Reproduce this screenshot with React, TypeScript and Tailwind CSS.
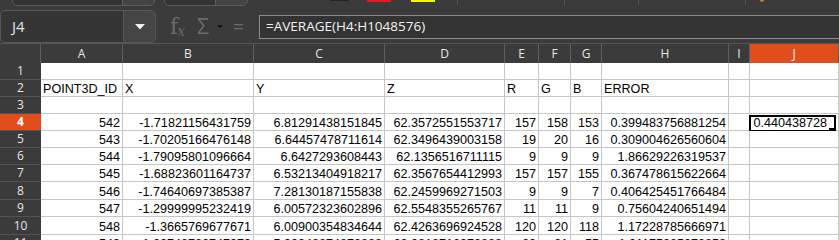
import React from "react";

const colLetters = ["A", "B", "C", "D", "E", "F", "G", "H", "I", "J"];
const rowHeights = ["h-[17px]", "h-[17px]", "h-[17px]", "h-[17px]", "h-[17px]", "h-[17px]", "h-[17px]", "h-[18px]", "h-[17px]", "h-[18px]", "h-[17px]"];

// numeric columns are right aligned, labels left aligned
const header = ["POINT3D_ID", "X", "Y", "Z", "R", "G", "B", "ERROR", "", ""];

const data: string[][] = [
  ["542", "-1.71821156431759", "6.81291438151845", "62.3572551553717", "157", "158", "153", "0.399483756881254", "", "0.440438728"],
  ["543", "-1.70205166476148", "6.64457478711614", "62.3496439003158", "19", "20", "16", "0.309004626560604", "", ""],
  ["544", "-1.79095801096664", "6.6427293608443", "62.1356516711115", "9", "9", "9", "1.86629226319537", "", ""],
  ["545", "-1.68823601164737", "6.53213404918217", "62.3567654412993", "157", "157", "155", "0.367478615622664", "", ""],
  ["546", "-1.74640697385387", "7.28130187155838", "62.2459969271503", "9", "9", "7", "0.406425451766484", "", ""],
  ["547", "-1.29999995232419", "6.00572323602896", "62.5548355265767", "11", "11", "9", "0.75604240651494", "", ""],
  ["548", "-1.3665769677671", "6.00900354834644", "62.4263696924528", "120", "120", "118", "1.17228785666971", "", ""],
  ["549", "-1.60748786747979", "5.99348874872888", "62.3818716972888", "60", "61", "55", "1.01175285270858", "", ""],
];

function Cell({ text, right }: { text: string; right?: boolean }) {
  return (
    <div
      className={`relative flex items-end bg-white border-r border-b border-[#c6c6c6] font-['Liberation_Sans',Arial,sans-serif] text-[12.6px] leading-[13px] text-black whitespace-nowrap ${
        right ? "justify-end pr-[2px]" : "justify-start pl-[2px]"
      }`}
    >
      {text}
    </div>
  );
}

export default function App() {
  const rows: { cells: string[]; right: boolean }[] = [
    { cells: Array(10).fill(""), right: false },
    { cells: header, right: false },
    { cells: Array(10).fill(""), right: false },
    ...data.map((r) => ({ cells: r, right: true })),
  ];

  return (
    <div className="w-[839px] h-[240px] overflow-hidden bg-[#3b3b3b] font-['Open_Sans',sans-serif]">
      {/* toolbar remnants, cut off at the top */}
      <div className="h-[10px] flex items-start overflow-hidden">
        <div className="ml-[12px] w-[143px] h-[20px] -mt-[14px] flex rounded-[5px] border border-[#5c5c5c] bg-[#333333] overflow-hidden">
          <div className="flex-1" />
          <div className="w-[32px] bg-[#454545] border-l border-[#5c5c5c]" />
        </div>
        <div className="ml-[9px] w-[84px] h-[20px] -mt-[14px] flex rounded-[5px] border border-[#5c5c5c] bg-[#333333] overflow-hidden">
          <div className="flex-1" />
          <div className="w-[32px] bg-[#454545] border-l border-[#5c5c5c]" />
        </div>
        <div className="ml-[82px] w-[19px] h-[1px] bg-[#222222]" />
        <div className="ml-[18px] w-[24px] h-[2px] bg-[#e01b1b]" />
        <div className="ml-[20px] w-[24px] h-[2px] bg-[#f5f500]" />
        <div className="ml-[22px] w-px h-[5px] bg-[#555555]" />
        <div className="ml-[106px] w-px h-[5px] bg-[#555555]" />
        <div className="ml-[73px] w-px h-[5px] bg-[#555555]" />
        <div className="ml-[106px] w-px h-[5px] bg-[#555555]" />
        <div className="ml-[14px] w-[4px] h-[2px] rounded-b-full bg-[#b5812a]" />
      </div>

      {/* formula bar */}
      <div className="h-[33px] flex items-center">
        <div className="w-[156px] h-[33px] flex rounded-[5px] border border-[#575757] bg-[#353535] overflow-hidden">
          <div className="flex-1 flex items-center pl-[11px] text-[15px] text-[#e6e6e6]">J4</div>
          <div className="w-[32px] flex items-center justify-center bg-[#454545] border-l border-[#575757]">
            <svg width="10" height="6" viewBox="0 0 10 6">
              <path d="M0 0 L10 0 L5 5.5 Z" fill="#f0f0f0" />
            </svg>
          </div>
        </div>
        <div className="ml-[14px] w-[20px] flex items-center text-[#6a6a6a]">
          <span className="font-['DejaVu_Serif',serif] text-[22px] leading-none">f</span>
          <span className="font-['DejaVu_Serif',serif] italic text-[14px] leading-none mt-[8px] -ml-[1px]">x</span>
        </div>
        <span className="ml-[6px] w-[14px] text-[21px] leading-none text-[#6a6a6a] text-center">Σ</span>
        <svg className="ml-[7px]" width="6" height="4" viewBox="0 0 7 5">
          <path d="M0 0 L7 0 L3.5 4.5 Z" fill="#141414" />
        </svg>
        <span className="ml-[10px] w-[10px] text-[19px] leading-none text-[#6a6a6a] text-center">=</span>
        <div className="ml-[16px] flex-1 h-[24px] flex items-center pl-[6px] bg-[#333333] border-y border-l border-[#8a8a8a] text-[13.5px] text-[#f2f2f2]">
          =AVERAGE(H4:H1048576)
        </div>
      </div>

      {/* sheet */}
      <div className="grid grid-cols-[41px_82px_131px_131px_120px_34px_32px_31px_127px_21px_89px] border-t border-[#555555]">
        <div className="h-[19px] bg-[#3b3b3b] border-r border-[#5e5e5e]" />
        {colLetters.map((c) => (
          <div
            key={c}
            className={`h-[19px] flex items-center justify-center text-[12px] border-r border-[#5e5e5e] ${
              c === "J" ? "bg-[#e14d1b] text-white" : "bg-[#3b3b3b] text-[#e6e6e6]"
            }`}
          >
            {c}
          </div>
        ))}

        {rows.map((row, i) => (
          <React.Fragment key={i}>
            <div
              className={`${rowHeights[i]} flex items-center justify-center text-[12px] border-b border-[#525252] ${
                i === 3 ? "bg-[#e14d1b] text-white font-bold" : "bg-[#3b3b3b] text-[#e6e6e6]"
              }`}
            >
              {i + 1}
            </div>
            {row.cells.map((t, j) =>
              i === 3 && j === 9 ? (
                <div
                  key={j}
                  className="relative flex items-end justify-end pr-[11px] bg-white border-r border-b border-[#c6c6c6] font-['Liberation_Sans',Arial,sans-serif] text-[12.6px] leading-[13px] text-black"
                >
                  {t}
                  <div className="absolute left-[-1px] top-[1px] w-[87px] h-[17px] border-2 border-black" />
                  <div className="absolute left-[79px] top-[14px] w-[6px] h-[6px] bg-black" />
                </div>
              ) : (
                <Cell key={j} text={t} right={row.right} />
              )
            )}
          </React.Fragment>
        ))}
      </div>
    </div>
  );
}
